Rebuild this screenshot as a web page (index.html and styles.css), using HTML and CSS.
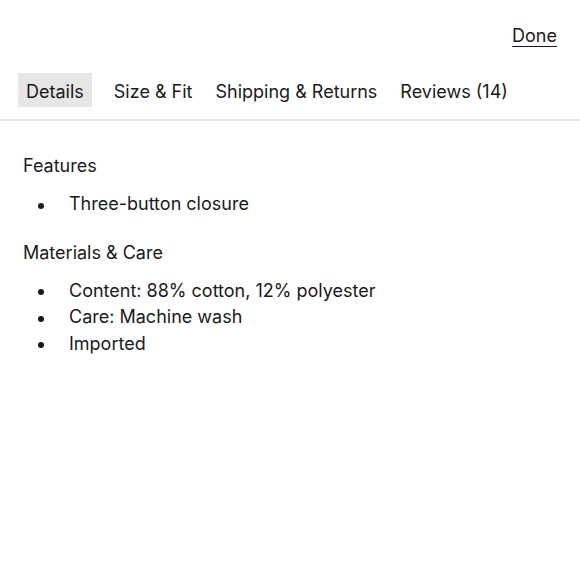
FILE: index.html
```html
<!DOCTYPE html>
<html>
<head>
<meta charset="utf-8">
<link rel="stylesheet" href="styles.css">
</head>
<body>
<div class="sheet">
  <div class="topbar"><a class="done" href="#">Done</a></div>
  <nav class="tabs">
    <span class="tab active">Details</span>
    <span class="tab">Size &amp; Fit</span>
    <span class="tab">Shipping &amp; Returns</span>
    <span class="tab">Reviews (14)</span>
  </nav>
  <div class="content">
    <h3 class="heading">Features</h3>
    <ul class="list">
      <li>Three-button closure</li>
    </ul>
    <h3 class="heading">Materials &amp; Care</h3>
    <ul class="list">
      <li>Content: 88% cotton, 12% polyester</li>
      <li>Care: Machine wash</li>
      <li>Imported</li>
    </ul>
  </div>
</div>
</body>
</html>
```
FILE: styles.css
```css
html, body { margin: 0; padding: 0; background: #fff; }
body { font-family: Inter, "Noto Sans", sans-serif; color: #1a1a1a; font-size: 18px; }
.sheet { width: 580px; }
.topbar { display: flex; justify-content: flex-end; padding: 22px 23px 0 0; height: 28px; }
.done { color: #1a1a1a; text-decoration: underline; text-underline-offset: 4px; font-size: 18px; line-height: 28px; }
.tabs { display: flex; padding: 23px 0 12px 18px; border-bottom: 2px solid #e6e6e6; }
.tab { padding: 3px 6px 0; height: 31px; line-height: 31px; margin-right: 11px; }
.tab.active { background: #e6e6e6; padding: 3px 8px 0; margin-right: 16px; }
.content { padding: 32px 23px; }
.heading { font-weight: 400; font-size: 18px; margin: 0; line-height: 26px; }
.list { list-style: none; margin: 12px 0 22px; padding: 0; line-height: 26.5px; }
.list li { display: flex; align-items: center; }
.list li::before { content: ""; width: 6px; height: 6px; border-radius: 50%; background: #1a1a1a; margin: 3px 25px 0 15px; flex: none; }
```
